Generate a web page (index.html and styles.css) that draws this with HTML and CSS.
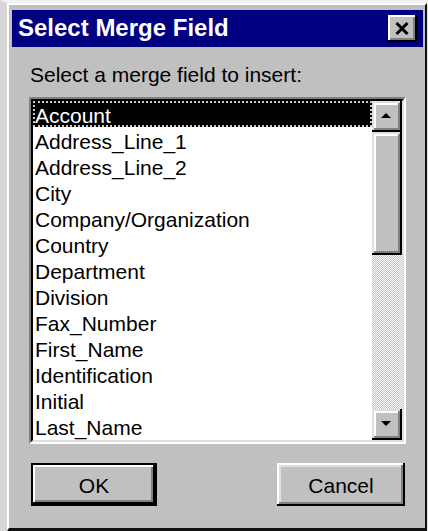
FILE: index.html
```html
<!DOCTYPE html>
<html lang="en">
<head>
<meta charset="utf-8">
<title>Select Merge Field</title>
<link rel="stylesheet" href="styles.css">
</head>
<body>
<div class="window">
  <div class="window-inner">
    <div class="titlebar">
      <span class="title">Select Merge Field</span>
      <button class="close" type="button" aria-label="Close">
        <svg width="14" height="13" viewBox="0 0 14 13"><path d="M1.5 1 L12.5 12 M12.5 1 L1.5 12" stroke="#000" stroke-width="3" fill="none"/></svg>
      </button>
    </div>
    <div class="dialog-body">
      <div class="prompt">Select a merge field to insert:</div>
      <div class="listbox">
        <ul class="items">
          <li class="item selected">Account</li>
          <li class="item">Address_Line_1</li>
          <li class="item">Address_Line_2</li>
          <li class="item">City</li>
          <li class="item">Company/Organization</li>
          <li class="item">Country</li>
          <li class="item">Department</li>
          <li class="item">Division</li>
          <li class="item">Fax_Number</li>
          <li class="item">First_Name</li>
          <li class="item">Identification</li>
          <li class="item">Initial</li>
          <li class="item">Last_Name</li>
        </ul>
        <div class="scrollbar">
          <div class="sb-button">
            <svg width="10" height="5" viewBox="0 0 10 5"><path d="M5 0 L10 5 L0 5 Z" fill="#000"/></svg>
          </div>
          <div class="sb-thumb"></div>
          <div class="sb-track"></div>
          <div class="sb-button">
            <svg width="10" height="5" viewBox="0 0 10 5"><path d="M0 0 L10 0 L5 5 Z" fill="#000"/></svg>
          </div>
        </div>
      </div>
      <div class="actions">
        <button class="btn default" type="button"><span class="btn-face">OK</span></button>
        <button class="btn" type="button"><span class="btn-face">Cancel</span></button>
      </div>
    </div>
  </div>
</div>
</body>
</html>
```
FILE: styles.css
```css
* {
  box-sizing: border-box;
}

html, body {
  margin: 0;
  padding: 0;
  background: #ffffff;
}

body {
  font-family: "Liberation Sans", Arial, sans-serif;
  color: #000;
}

/* outer window frame */
.window {
  width: 428px;
  height: 531px;
  border-top: 3px solid #f2f2f2;
  border-left: 7px solid #d6d6d6;
  border-right: 1px solid #e4e4e4;
  background: #c0c0c0;
}

.window-inner {
  height: 100%;
  background: #c0c0c0;
  border-top: 2px solid #ffffff;
  border-left: 2px solid #ffffff;
  border-right: 2px solid #111111;
  border-bottom: 3px solid #111111;
  padding: 5px 2px 0 3px;
}

/* caption bar */
.titlebar {
  height: 37px;
  background: #000080;
  display: flex;
  align-items: center;
  justify-content: space-between;
  padding: 0 6px 0 6px;
}

.title {
  color: #ffffff;
  font-weight: bold;
  font-size: 24px;
  line-height: 28px;
  margin-top: -2px;
}

.close {
  width: 29px;
  height: 27px;
  padding: 0;
  margin: 0;
  background: #c0c0c0;
  border: none;
  box-shadow: inset -2px -2px #000000, inset 2px 2px #ffffff, inset -4px -4px #808080;
  display: flex;
  align-items: center;
  justify-content: center;
}

.close svg {
  display: block;
  margin: -1px 1px 0 0;
}

/* dialog content */
.dialog-body {
  padding: 0 17px;
}

.prompt {
  margin-top: 15px;
  padding-left: 1px;
  font-size: 21px;
  line-height: 26px;
  height: 26px;
}

/* sunken list box */
.listbox {
  margin-top: 9px;
  height: 347px;
  background: #ffffff;
  border-top: 2px solid #808080;
  border-left: 2px solid #808080;
  border-right: 2px solid #ffffff;
  border-bottom: 2px solid #ffffff;
  display: flex;
}

.items {
  flex: 1;
  list-style: none;
  margin: 0;
  padding: 0;
  border-top: 2px solid #000000;
  border-left: 2px solid #000000;
  border-bottom: 2px solid #dfdfdf;
  overflow: hidden;
}

.item {
  height: 26px;
  padding-top: 3px;
  line-height: 23px;
  font-size: 21px;
  padding-left: 2px;
  white-space: nowrap;
}

.item.selected {
  background: #000000;
  color: #ffffff;
  outline: 2px dotted #c8c8c8;
  outline-offset: -2px;
}

/* vertical scroll bar */
.scrollbar {
  width: 32px;
  display: flex;
  flex-direction: column;
  border-top: 2px solid #000000;
  border-right: 2px solid #dfdfdf;
  border-bottom: 2px solid #dfdfdf;
}

.sb-button,
.sb-thumb {
  background: #c0c0c0;
  box-shadow: inset -2px -2px #000000, inset 2px 2px #dfdfdf, inset -4px -4px #808080, inset 4px 4px #ffffff;
}

.sb-button {
  height: 31px;
  display: flex;
  align-items: center;
  justify-content: center;
}

.sb-button svg {
  display: block;
  margin: 0 2px 2px 0;
}

.sb-thumb {
  height: 123px;
}

.sb-track {
  flex: 1;
  background-color: #c0c0c0;
  background-image: repeating-conic-gradient(#ffffff 0 25%, #c0c0c0 0 50%);
  background-size: 2px 2px;
}

/* push buttons */
.actions {
  margin-top: 19px;
  display: flex;
  justify-content: space-between;
  padding: 0 1px 0 2px;
}

.btn {
  height: 43px;
  padding: 0;
  margin: 0;
  border: none;
  background: #c0c0c0;
  font-family: "Liberation Sans", Arial, sans-serif;
  font-size: 21px;
  color: #000;
  width: 128px;
  box-shadow: inset -2px -2px #000000, inset 2px 2px #ffffff, inset -4px -4px #808080, inset 4px 4px #dfdfdf;
}

.btn.default {
  width: 126px;
  border: 2px solid #000000;
  box-shadow: inset -2px -2px #000000, inset 2px 2px #ffffff, inset -4px -4px #808080;
}

.btn-face {
  display: block;
  line-height: 26px;
  padding-top: 2px;
}
```
